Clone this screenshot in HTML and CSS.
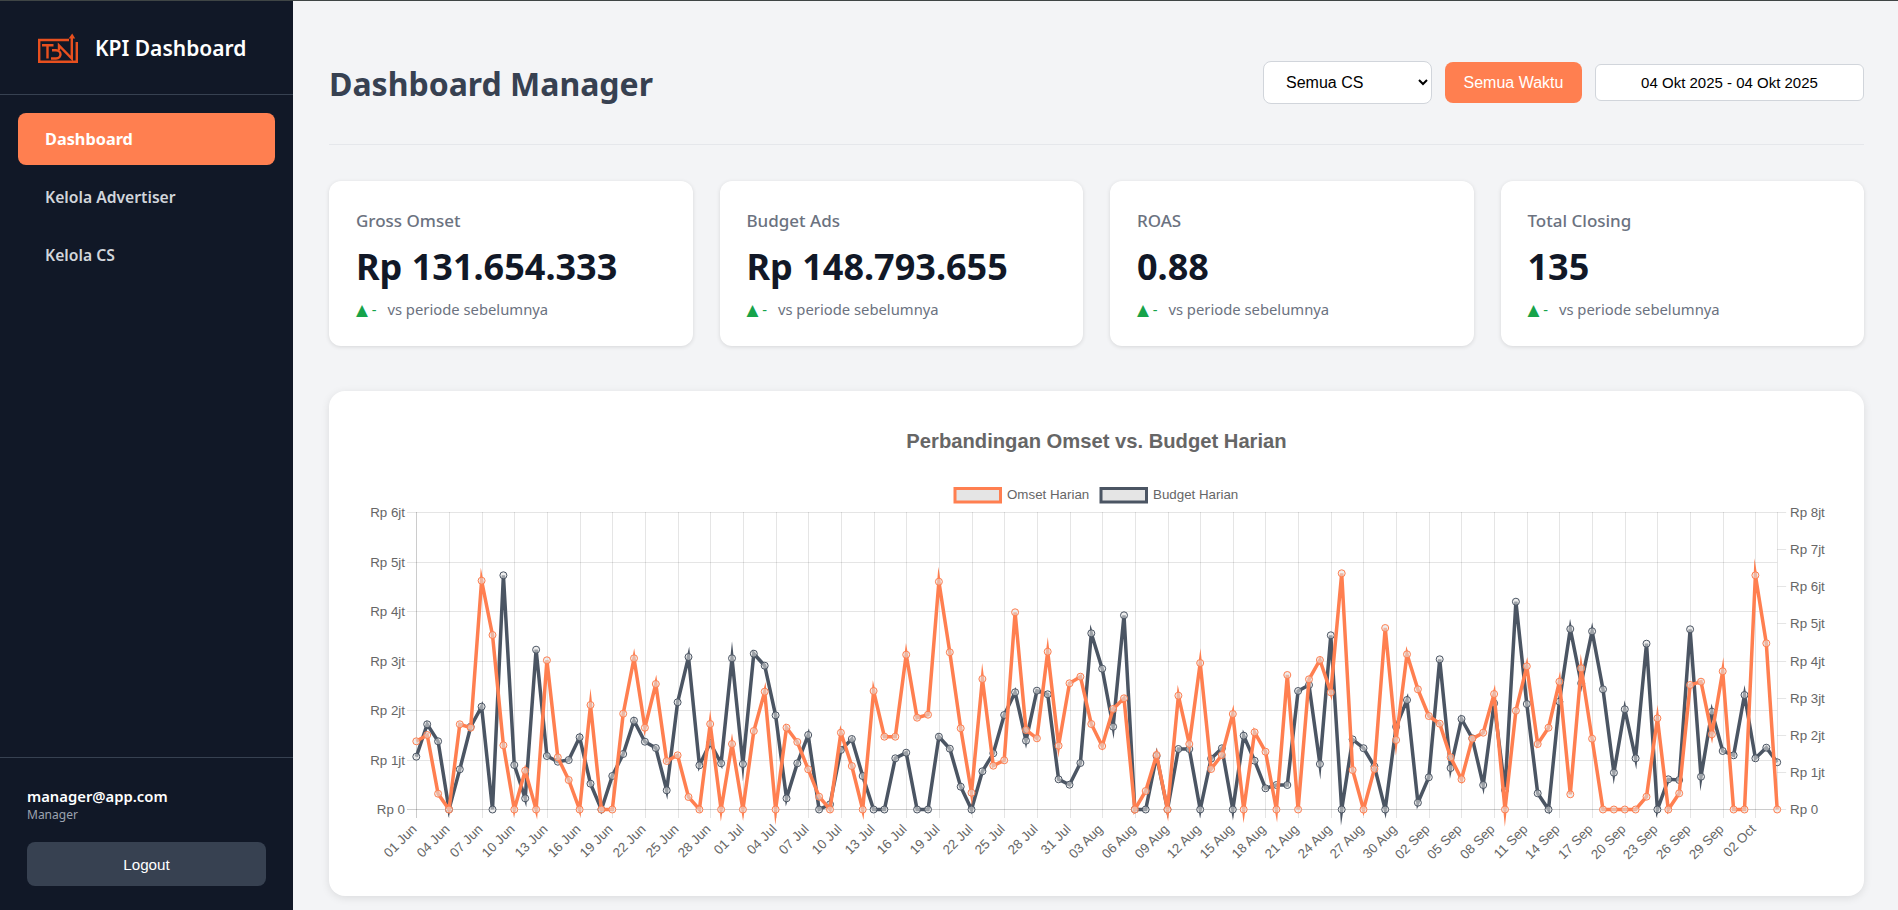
FILE: index.html
```html
<!doctype html>
<html>
<head>
<meta charset="utf-8">
<title>KPI Dashboard</title>
<link rel="stylesheet" href="styles.css">
</head>
<body>
<aside class="sidebar">
  <div class="brand">
    <svg class="brand-logo" viewBox="0 0 40 30" width="40" height="30">
      <path class="logo-line" d="M31 7H1.2V28.8H38.8V9"/>
      <path class="logo-line" d="M4 12.2H15.5M9.5 12.2V25.5"/>
      <path class="logo-line" d="M14 17.2H18C24 17.2 24 25.5 18 25.5H13"/>
      <path class="logo-line" d="M21 17V12.5L33.8 25.5V4"/>
      <path class="logo-fill" d="M30.7 5.5L34.2 .5L37.2 5.5Z"/>
    </svg>
    <span class="brand-name">KPI Dashboard</span>
  </div>
  <nav class="nav">
    <a class="nav-item active">Dashboard</a>
    <a class="nav-item">Kelola Advertiser</a>
    <a class="nav-item">Kelola CS</a>
  </nav>
  <div class="account">
    <div class="account-mail">manager@app.com</div>
    <div class="account-role">Manager</div>
    <button class="logout">Logout</button>
  </div>
</aside>
<main class="main">
  <header class="page-head">
    <h1>Dashboard Manager</h1>
    <div class="filters">
      <select class="cs-select"><option>Semua CS</option></select>
      <button class="all-time">Semua Waktu</button>
      <input class="date-range" value="04 Okt 2025 - 04 Okt 2025" readonly>
    </div>
  </header>
  <section class="stats">
    <div class="stat">
      <div class="stat-label">Gross Omset</div>
      <div class="stat-value">Rp 131.654.333</div>
      <div class="stat-trend"><span class="up"><span class="tri">▲</span> -</span> vs periode sebelumnya</div>
    </div>
    <div class="stat">
      <div class="stat-label">Budget Ads</div>
      <div class="stat-value">Rp 148.793.655</div>
      <div class="stat-trend"><span class="up"><span class="tri">▲</span> -</span> vs periode sebelumnya</div>
    </div>
    <div class="stat">
      <div class="stat-label">ROAS</div>
      <div class="stat-value">0.88</div>
      <div class="stat-trend"><span class="up"><span class="tri">▲</span> -</span> vs periode sebelumnya</div>
    </div>
    <div class="stat">
      <div class="stat-label">Total Closing</div>
      <div class="stat-value">135</div>
      <div class="stat-trend"><span class="up"><span class="tri">▲</span> -</span> vs periode sebelumnya</div>
    </div>
  </section>
  <section class="chart-card">
    <svg id="chart" class="chart" viewBox="329 391 1535 505"></svg>
  </section>
</main>
<script src="chart.js"></script>
</body>
</html>
```
FILE: styles.css
```css
* {
    box-sizing: border-box;
}
body {
    margin: 0;
    height: 910px;
    overflow: hidden;
    display: flex;
    border-top: 1px solid #3f4545;
    background: #f3f4f6;
    font-family: "Noto Sans", sans-serif;
    color: #111827;
}

.sidebar {
    width: 293px;
    flex: none;
    display: flex;
    flex-direction: column;
    background: #111827;
}
.brand {
    height: 94px;
    padding: 0 0 0 38px;
    display: flex;
    align-items: center;
    gap: 17px;
    border-bottom: 1px solid #374151;
}
.brand-logo {
    flex: none;
}
.logo-line {
    fill: none;
    stroke: #e8501f;
    stroke-width: 2.4;
}
.logo-fill {
    fill: #e8501f;
}
.brand-name {
    font-size: 21px;
    font-weight: 600;
    color: #fff;
}
.nav {
    flex: 1;
    padding: 18px 18px 0;
    display: flex;
    flex-direction: column;
    gap: 6px;
}
.nav-item {
    height: 52px;
    line-height: 52px;
    padding-left: 27px;
    border-radius: 8px;
    font-size: 15.7px;
    font-weight: 600;
    color: #d1d5db;
}
.nav-item.active {
    background: #ff7f50;
    color: #fff;
    font-size: 16.3px;
    font-weight: 700;
}
.account {
    height: 153px;
    padding: 28px 27px 0;
    border-top: 1px solid #374151;
}
.account-mail {
    font-size: 14.8px;
    font-weight: 600;
    line-height: 20px;
    color: #fff;
}
.account-role {
    font-size: 12px;
    line-height: 18px;
    color: #9ca3af;
}
.logout {
    display: block;
    width: 239px;
    height: 44px;
    margin-top: 18px;
    border: 0;
    border-radius: 8px;
    background: #374151;
    color: #fff;
    font: 15.2px "Liberation Sans", sans-serif;
}

.main {
    flex: 1;
    min-width: 0;
    padding: 0 34px 0 36px;
}
.page-head {
    height: 144px;
    padding-top: 59px;
    display: flex;
    justify-content: space-between;
    align-items: flex-start;
    border-bottom: 1px solid #e5e7eb;
}
.page-head h1 {
    margin: 0;
    font-size: 32px;
    line-height: 48px;
    font-weight: 700;
    color: #374151;
}
.filters {
    height: 45px;
    display: flex;
    align-items: center;
    gap: 13px;
}
.cs-select {
    width: 169px;
    height: 43px;
    padding: 0 0 0 18px;
    border: 1px solid #d1d5db;
    border-radius: 8px;
    background: #fff;
    color: #000;
    font: 16px "Liberation Sans", sans-serif;
}
.all-time {
    width: 137px;
    height: 41px;
    border: 0;
    border-radius: 8px;
    background: #ff7f50;
    color: #fff;
    font: 16px "Liberation Sans", sans-serif;
}
.date-range {
    width: 269px;
    height: 37px;
    border: 1px solid #d1d5db;
    border-radius: 6px;
    background: #fff;
    color: #000;
    text-align: center;
    font: 15px "Liberation Sans", sans-serif;
}

.stats {
    margin-top: 36px;
    display: grid;
    grid-template-columns: repeat(4, 1fr);
    gap: 27px;
}
.stat {
    height: 165px;
    padding: 27px 27px 0;
    border-radius: 12px;
    background: #fff;
    box-shadow: 0 1px 4px rgba(0,0,0,0.12);
}
.stat-label {
    font-size: 17px;
    font-weight: 500;
    line-height: 26px;
    color: #6b7280;
}
.stat-value {
    margin-top: 8px;
    font-size: 36px;
    font-weight: 700;
    line-height: 50px;
    color: #111827;
}
.stat-trend {
    margin-top: 5px;
    font-size: 14.8px;
    line-height: 24px;
    color: #6b7280;
}
.up {
    color: #16a34a;
    margin-right: 7px;
}
.tri {
    font-family: "DejaVu Sans", sans-serif;
    font-size: 15.5px;
    line-height: 1;
}

.chart-card {
    height: 505px;
    margin-top: 45px;
    border-radius: 16px;
    background: #fff;
    box-shadow: 0 2px 8px rgba(0,0,0,0.1);
    overflow: hidden;
}
.chart {
    display: block;
    width: 100%;
    height: 100%;
    font-family: "Liberation Sans", sans-serif;
    font-size: 13.33px;
    fill: #666;
}
.chart-title {
    font-size: 20.2px;
    font-weight: 700;
    text-anchor: middle;
}
.grid {
    stroke: rgba(0,0,0,0.1);
    stroke-width: 1;
}
.axis {
    stroke: rgba(0,0,0,0.2);
    stroke-width: 1;
}
.series {
    fill: none;
    stroke-width: 3.5;
    stroke-miterlimit: 10;
}
.dot {
    fill: rgba(226,226,226,0.55);
    stroke-width: 1;
}
.omset {
    stroke: #ff7f50;
}
.budget {
    stroke: #4b5563;
}
.legend-box {
    fill: #e5e5e5;
    stroke-width: 3;
}
```
FILE: chart.js
```javascript
// y positions are pixels inside the svg, both axes share the same plot box
var budget = [756.7,724.3,741.3,809.5,769.3,726.7,706.7,809.5,575.3,765,798.3,649.7,756,761.7,760,737.3,783.7,809.5,776,754,720.7,741.7,748,790.3,702.3,657,765.3,743,763.3,658.3,764,653.7,665.7,715.3,798.3,763.3,735,809.5,804.3,750,
    739,776,809.5,809.5,758.3,752.7,809.5,809.5,736.7,748.7,786.7,809.5,771.3,753.3,715,692.3,740.7,690.7,694.3,779.3,784.7,763,633.3,668.7,726.7,615.3,809.5,809.5,756,809.5,749,749,809.5,758.7,748.3,809.5,735.7,760.7,788.3,785,785,691,685,764,635.3,809.5,
    739.4,748.2,766.3,809.5,726.7,700,802.7,777.3,659.3,768,719,738.3,785,703.3,790,601.7,704,793.3,809.5,701.7,629,683.3,631.3,689.3,772.7,709.3,758.3,643.7,809.5,779.3,780,629.3,776.7,711.7,751,755.3,695,758.3,747.7,762.3];
var omset = [741.3,735,793.7,809.5,724.3,727.7,580.7,635,745.3,809.5,770.7,809.5,660.3,757.3,780,809.5,705,809.5,809.5,713.7,658.3,727.7,684,761,755.3,797,809.5,724,809.5,744,809.5,731,691.7,809.5,727.7,742,769.3,796.7,809.5,732.7,
    766,809.5,691,736.7,736.7,654.7,717.7,714.7,581.7,652.3,728.3,792.7,679,765.7,760.3,612.3,730,738.3,651.7,745.7,683.3,676.7,724,746,709,698.3,809.5,791,755,809.5,695.7,744,663,769,755,714,809.5,732.3,751.7,809.5,675,809.5,679.3,660,692.3,573.3,
    770,809.5,769,628,740,654.3,689.3,716,723.7,757.3,779.3,738.7,732.7,694,809.5,710.7,666.3,744,727.7,681.7,794.3,668.3,738.7,809.5,809.5,809.5,809.5,796.7,718.3,809.5,793.3,685,681.7,734.3,671.3,809.5,809.5,575.3,643.3,809.5];

var MONTHS = ["Jun", "Jul", "Aug", "Sep", "Oct"];
var MONTH_DAYS = [30, 31, 31, 30, 31];
var X0 = 416.3, XSTEP = 10.887, XEND = X0 + 125 * XSTEP;
var TOP = 512, BOTTOM = 809;
var svg = document.getElementById("chart");

function el(name, attrs, text) {
    var node = document.createElementNS("http://www.w3.org/2000/svg", name);
    for (var key in attrs) {
        node.setAttribute(key, attrs[key]);
    }
    if (text) {
        node.textContent = text;
    }
    svg.appendChild(node);
    return node;
}
function px(n) {
    return Math.round(n) + 0.5;
}
function dateLabel(i) {
    var m = 0;
    while (i >= MONTH_DAYS[m]) {
        i -= MONTH_DAYS[m];
        m++;
    }
    var d = i + 1;
    return (d < 10 ? "0" + d : d) + " " + MONTHS[m];
}

el("text", {class: "chart-title", x: 1096.5, y: 448}, "Perbandingan Omset vs. Budget Harian");

// legend
el("rect", {class: "legend-box omset", x: 955, y: 488.5, width: 45.5, height: 13.5});
el("text", {x: 1007, y: 499}, "Omset Harian");
el("rect", {class: "legend-box budget", x: 1101, y: 488.5, width: 45.5, height: 13.5});
el("text", {x: 1153, y: 499}, "Budget Harian");

// left axis 0 - 6jt
for (var i = 0; i <= 6; i++) {
    var y = px(BOTTOM - i * (BOTTOM - TOP) / 6);
    el("line", {class: i == 0 ? "axis" : "grid", x1: 407, x2: XEND, y1: y, y2: y});
    el("text", {x: 405, y: y + 4, "text-anchor": "end"}, i == 0 ? "Rp 0" : "Rp " + i + "jt");
}
// right axis 0 - 8jt
for (var i = 0; i <= 8; i++) {
    var y = px(BOTTOM - i * (BOTTOM - TOP) / 8);
    el("line", {class: "grid", x1: XEND, x2: XEND + 9, y1: y, y2: y});
    el("text", {x: 1790, y: y + 4}, i == 0 ? "Rp 0" : "Rp " + i + "jt");
}
// date ticks every third day
for (var i = 0; i <= 123; i += 3) {
    var x = px(X0 + i * XSTEP);
    el("line", {class: i == 0 ? "axis" : "grid", x1: x, x2: x, y1: TOP, y2: BOTTOM + 9});
    el("text", {x: x + 1, y: 830, "text-anchor": "end", transform: "rotate(-45 " + (x + 1) + " 830)"}, dateLabel(i));
}
el("line", {class: "grid", x1: px(XEND), x2: px(XEND), y1: TOP, y2: BOTTOM});

function drawSeries(data, cls) {
    var pts = data.map(function(v, i) {
        return (X0 + i * XSTEP).toFixed(1) + "," + v;
    });
    el("polyline", {class: "series " + cls, points: pts.join(" ")});
    data.forEach(function(v, i) {
        el("circle", {class: "dot " + cls, cx: (X0 + i * XSTEP).toFixed(1), cy: v, r: 3.5});
    });
}
drawSeries(budget, "budget");
drawSeries(omset, "omset");
```
